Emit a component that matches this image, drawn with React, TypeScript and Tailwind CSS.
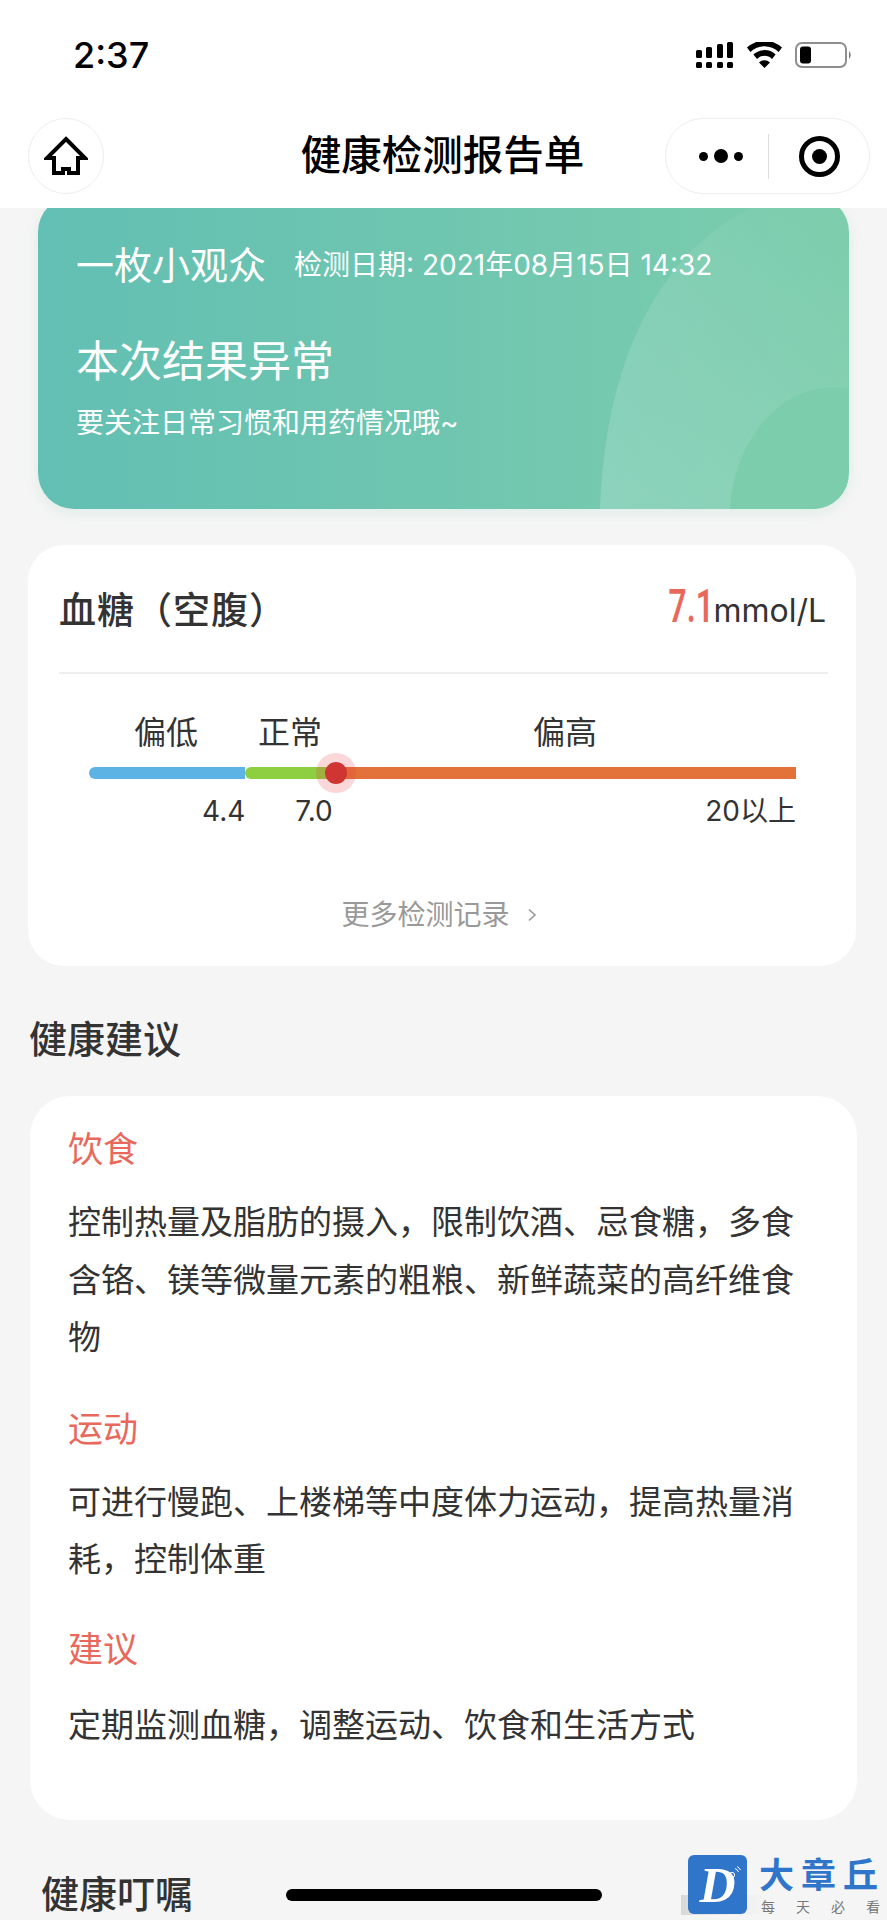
import React from "react";

const cjk = "font-['Inter','Noto_Sans_CJK_SC',sans-serif]";

function StatusIcons() {
  return (
    <svg width="157" height="26" viewBox="0 0 157 26" className="block">
      <g fill="#000">
        <rect x="0" y="8" width="6" height="8" rx="1.5" />
        <rect x="10" y="5" width="6" height="11" rx="1.5" />
        <rect x="21" y="2" width="6" height="14" rx="1.5" />
        <rect x="31" y="0" width="6" height="16" rx="1.5" />
        <rect x="0" y="20" width="6" height="6" rx="1.5" />
        <rect x="10" y="20" width="6" height="6" rx="1.5" />
        <rect x="21" y="20" width="6" height="6" rx="1.5" />
        <rect x="31" y="20" width="6" height="6" rx="1.5" />
        <path d="M51 7.5 A 26 26 0 0 1 86 7.5 L 82.6 12 A 20 20 0 0 0 54.4 12 Z" transform="translate(0 -2)" />
        <path d="M57.4 14.6 A 16 16 0 0 1 79.6 14.6 L 76 19 A 10.5 10.5 0 0 0 61 19 Z" transform="translate(0 -2)" />
        <path d="M63 20.4 A 8 8 0 0 1 74 20.4 L 68.5 26 Z" />
      </g>
      <rect x="100" y="1" width="50" height="24" rx="6" fill="none" stroke="#8e8e8e" strokeWidth="2" />
      <rect x="104" y="4.5" width="11" height="17" rx="3" fill="#000" />
      <path d="M153 9 Q156.5 13 153 17 Z" fill="#7a7a7a" />
    </svg>
  );
}

function HomeIcon() {
  return (
    <svg width="44" height="40" viewBox="0 0 44 40" fill="none" stroke="#000" strokeWidth="4" strokeLinejoin="miter">
      <path d="M22 3 L41 22 L34 22 L34 37 L25 37 L25 33 L19 33 L19 37 L10 37 L10 22 L3 22 Z" />
    </svg>
  );
}

function Capsule() {
  return (
    <div className="flex h-[76px] w-[205px] items-center rounded-[38px] border border-[#eeeeee] bg-white">
      <div className="flex w-[102px] items-center justify-end gap-[6px] pr-[25px]">
        <span className="h-[9px] w-[9px] rounded-full bg-black" />
        <span className="h-[14px] w-[14px] rounded-full bg-black" />
        <span className="h-[9px] w-[9px] rounded-full bg-black" />
      </div>
      <div className="h-[45px] w-px bg-[#dddddd]" />
      <div className="flex flex-1 items-center justify-center">
        <div className="flex h-[41px] w-[41px] items-center justify-center rounded-full border-[5px] border-black">
          <span className="h-[15px] w-[15px] rounded-full bg-black" />
        </div>
      </div>
    </div>
  );
}

function Hero() {
  return (
    <div className="relative mx-[38px] -mt-[12px] h-[313px] overflow-hidden rounded-[36px] bg-gradient-to-r from-[#62bfb3] to-[#7ccdac] pl-[38px] pt-[44px] text-white shadow-[0_4px_14px_rgba(120,200,170,0.18)]">
      <svg className="absolute inset-0" width="810" height="313" viewBox="0 0 810 313">
        <defs>
          <linearGradient id="halo" x1="0" y1="1" x2="1" y2="0">
            <stop offset="0" stopColor="#ffffff" stopOpacity="0.18" />
            <stop offset="0.55" stopColor="#ffffff" stopOpacity="0.09" />
            <stop offset="1" stopColor="#ffffff" stopOpacity="0" />
          </linearGradient>
        </defs>
        <path d="M562 313 C 566 200 600 70 712 12 L 810 0 L 810 313 Z" fill="url(#halo)" />
        <path d="M692 313 C 694 260 730 195 790 192 L 810 192 L 810 313 Z" fill="#7ccdac" />
      </svg>
      <div className="relative flex items-center">
        <span className="text-[38px] leading-[50px]">一枚小观众</span>
        <span className="ml-[28px] text-[28px] leading-[50px]">检测日期: 2021年08月15日 14:32</span>
      </div>
      <div className="relative mt-[42px] text-[43px] leading-[58px]">本次结果异常</div>
      <div className="relative mt-[13px] text-[28px] leading-[40px]">要关注日常习惯和用药情况哦~</div>
    </div>
  );
}

function GlucoseCard() {
  return (
    <div className="ml-[28px] mr-[31px] mt-[36px] h-[421px] rounded-[36px] bg-white pl-[31px] pr-[28px] pt-[37px]">
      <div className="flex h-[57px] items-center justify-between text-[#333333]">
        <span className="text-[37px] font-medium tracking-[1px]">血糖（空腹）</span>
        <span className="-mt-[7px] mr-[2px] flex items-baseline">
          <span className="inline-block origin-bottom-right scale-x-[0.72] scale-y-[1.05] font-['Roboto',sans-serif] text-[44px] font-semibold leading-none text-[#e8695c]">7.1</span>
          <span className="text-[32px] leading-none">mmol/L</span>
        </span>
      </div>
      <div className="mt-[33px] h-[2px] bg-[#eeeeee]" />
      <div className="ml-[30px] mt-[39px] w-[707px]">
        <div className="flex h-[40px] items-center text-[32px] leading-none text-[#333333]">
          <span className="ml-[45px]">偏低</span>
          <span className="ml-[60px]">正常</span>
          <span className="ml-[211px]">偏高</span>
        </div>
        <div className="relative mt-[14px] flex h-[12px]">
          <div className="w-[156px] rounded-l-full bg-[#5db4e4]" />
          <div className="w-[90px] rounded-l-full bg-[#8ecf42]" />
          <div className="flex-1 bg-[#e3723a]" />
          <div className="absolute left-[227px] top-[-14px] flex h-[40px] w-[40px] items-center justify-center rounded-full bg-[#e5363a]/20">
            <span className="h-[22px] w-[22px] rounded-full bg-[#cf3533]" />
          </div>
        </div>
        <div className="mt-[18px] flex h-[28px] items-center text-[28px] leading-none text-[#333333]">
          <span className="ml-[113px]">4.4</span>
          <span className="ml-[50px]">7.0</span>
          <span className="ml-auto">20以上</span>
        </div>
      </div>
      <div className="-ml-[9px] mt-[70px] flex items-center justify-center text-[28px] leading-[40px] text-[#999999]">
        <span>更多检测记录</span>
        <svg className="ml-[17px]" width="10" height="14" viewBox="0 0 10 14" fill="none" stroke="#999999" strokeWidth="1.6">
          <path d="M2 1.5 L8 7 L2 12.5" />
        </svg>
      </div>
    </div>
  );
}

function Advice({ title, lines, top, gap }: { title: string; lines: string[]; top: string; gap: string }) {
  return (
    <div className={top}>
      <div className="text-[35px] leading-[50px] text-[#e8695c]">{title}</div>
      <div className={`${gap} text-[33px] leading-[57.5px] text-[#333333]`}>
        {lines.map((l) => (
          <div key={l}>{l}</div>
        ))}
      </div>
    </div>
  );
}

function Logo() {
  return (
    <div className="absolute left-[678px] top-[1855px] flex h-[65px] w-[209px]">
      <div className="absolute bottom-[5px] left-[3px] h-[20px] w-[90px] bg-gradient-to-r from-[#d8d8d8] via-[#ececec] to-transparent" />
      <div className="relative ml-[10px] flex h-[59px] w-[59px] shrink-0 items-center justify-center rounded-[6px] bg-[#2f76cb]">
        <span className="font-['Liberation_Serif',serif] text-[50px] font-bold italic leading-none text-white">D</span>
        <svg className="absolute right-[5px] top-[10px]" width="14" height="14" viewBox="0 0 14 14" fill="none" stroke="#ffffff" strokeWidth="1">
          <circle cx="4" cy="10" r="2.6" />
          <path d="M7 3.5 A 6 6 0 0 1 10.5 7 M9 1.5 A 8 8 0 0 1 12.5 5" />
        </svg>
      </div>
      <div className="relative ml-[12px] shrink-0">
        <div className="mt-[1px] whitespace-nowrap text-[35px] font-bold leading-[38px] tracking-[7px] text-[#2f76cb]">大章丘</div>
        <div className="ml-[2px] mt-[5px] flex gap-[21px] whitespace-nowrap text-[14px] leading-[16px] text-[#777777]">
          <span>每</span>
          <span>天</span>
          <span>必</span>
          <span>看</span>
        </div>
      </div>
    </div>
  );
}

export default function App() {
  return (
    <div className={`relative h-[1920px] w-[887px] overflow-hidden bg-[#f5f5f5] ${cjk}`}>
      <header className="relative z-10 h-[208px] bg-white">
        <div className="flex h-[118px] items-start justify-between pl-[73px] pr-[34px] pt-[36px]">
          <span className="text-[36px] font-medium leading-[38px] text-black">2:37</span>
          <div className="pt-[6px]"><StatusIcons /></div>
        </div>
        <div className="grid grid-cols-[1fr_auto_1fr] items-center pl-[28px] pr-[17px]">
          <div className="flex h-[76px] w-[76px] items-center justify-center rounded-full border border-[#eeeeee]">
            <HomeIcon />
          </div>
          <div className="mr-[13px] text-[40.5px] font-medium leading-[76px] text-black">健康检测报告单</div>
          <div className="justify-self-end"><Capsule /></div>
        </div>
      </header>
      <Hero />
      <GlucoseCard />
      <h2 className="mb-[27px] ml-[29px] mt-[43px] text-[38px] font-medium leading-[60px] text-[#333333]">健康建议</h2>
      <div className="mx-[30px] h-[724px] rounded-[40px] bg-white px-[38px] pt-[28px]">
        <Advice
          top=""
          gap="mt-[20px]"
          title="饮食"
          lines={["控制热量及脂肪的摄入，限制饮酒、忌食糖，多食", "含铬、镁等微量元素的粗粮、新鲜蔬菜的高纤维食", "物"]}
        />
        <Advice top="mt-[37px]" gap="mt-[20px]" title="运动" lines={["可进行慢跑、上楼梯等中度体力运动，提高热量消", "耗，控制体重"]} />
        <Advice top="mt-[35px]" gap="mt-[23px]" title="建议" lines={["定期监测血糖，调整运动、饮食和生活方式"]} />
      </div>
      <h2 className="ml-[41px] mt-[44px] text-[38px] font-medium leading-[60px] text-[#333333]">健康叮嘱</h2>
      <div className="absolute left-[286px] top-[1889px] h-[12px] w-[316px] rounded-full bg-black" />
      <Logo />
    </div>
  );
}
